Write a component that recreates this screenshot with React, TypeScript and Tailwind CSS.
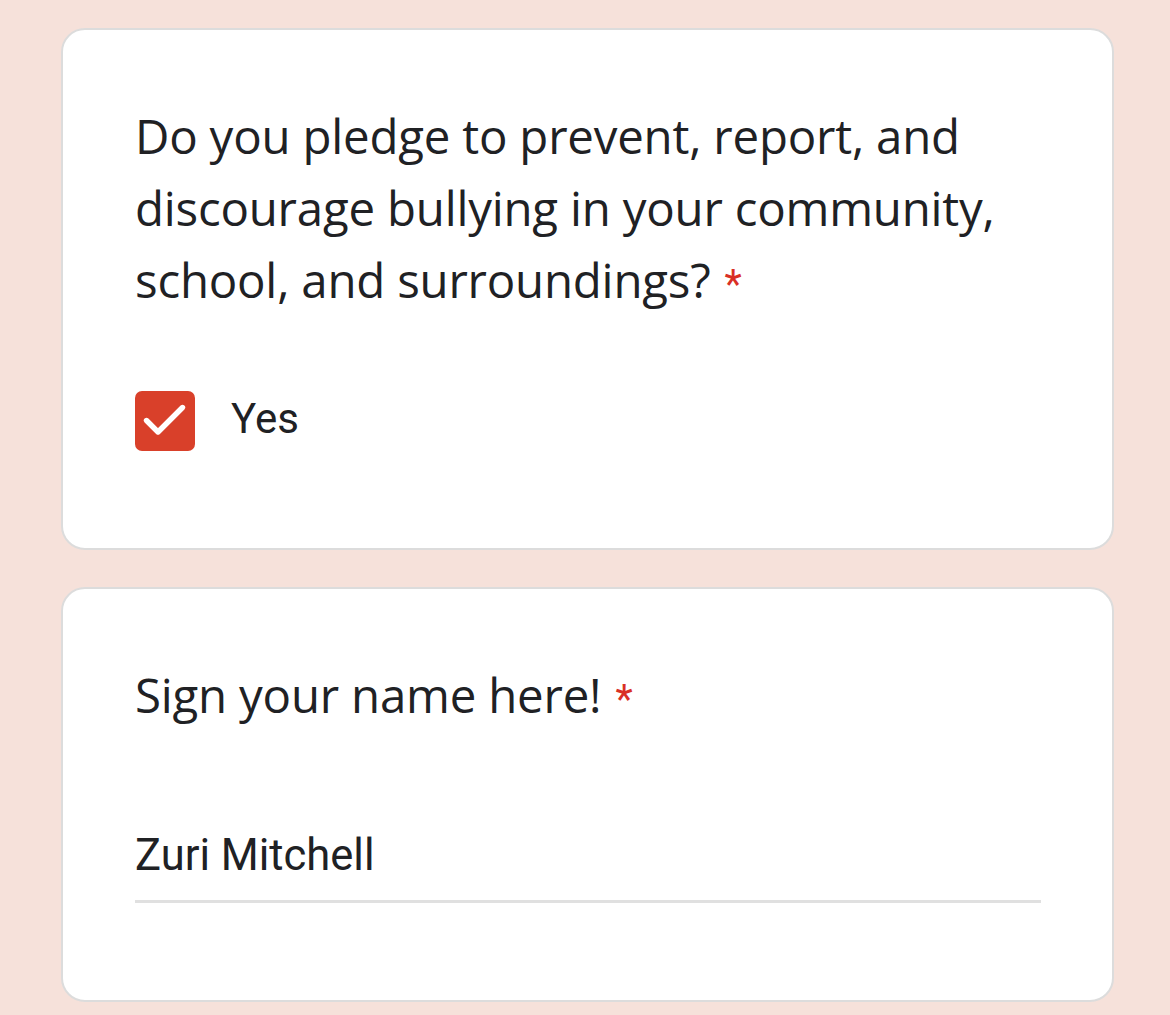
import React from "react";

function Check() {
  return (
    <div className="w-[60px] h-[60px] rounded-[7px] bg-[#d9402a] shrink-0">
      <svg width="60" height="60" viewBox="0 0 60 60" fill="none">
        <path d="M11.5 29.5 L23 41 L47.5 16.5" stroke="white" strokeWidth="5.4" strokeLinecap="round" strokeLinejoin="round" />
      </svg>
    </div>
  );
}

function Star() {
  return <span className="text-[#d93025] font-['Roboto',sans-serif] text-[40px] ml-[14px]">*</span>;
}

export default function App() {
  const title = "font-['Open_Sans',sans-serif] text-[47.4px] leading-[72px] text-[#202124] tracking-[-0.2px]";
  return (
    <div className="min-h-[1015px] w-[1170px] bg-[#f6e1da] pt-[28px] pl-[61px] overflow-hidden">
      <div className="w-[1053px] flex flex-col gap-[37px]">
        <div className="bg-white border-2 border-[#dcdcdc] rounded-[24px] pt-[70px] pb-[97px] px-[72px]">
          <div className={title}>
            <div>Do you pledge to prevent, report, and</div>
            <div>discourage bullying in your community,</div>
            <div>
              school, and surroundings?<Star />
            </div>
          </div>
          <div className="flex items-center gap-[36px] mt-[70px]">
            <Check />
            <span className="font-['Roboto',sans-serif] text-[42px] leading-[52px] text-[#202124] -mt-[4px]">Yes</span>
          </div>
        </div>
        <div className="bg-white border-2 border-[#dcdcdc] rounded-[24px] pt-[70px] pb-[97px] px-[72px]">
          <div className={title}>
            Sign your name here!<Star />
          </div>
          <div className="mt-[90px] w-[906px] border-b-[3px] border-[#e0e0e0] pb-[14px]">
            <span className="block font-['Roboto',sans-serif] text-[43.5px] leading-[60px] text-[#202124]">Zuri Mitchell</span>
          </div>
        </div>
      </div>
    </div>
  );
}
